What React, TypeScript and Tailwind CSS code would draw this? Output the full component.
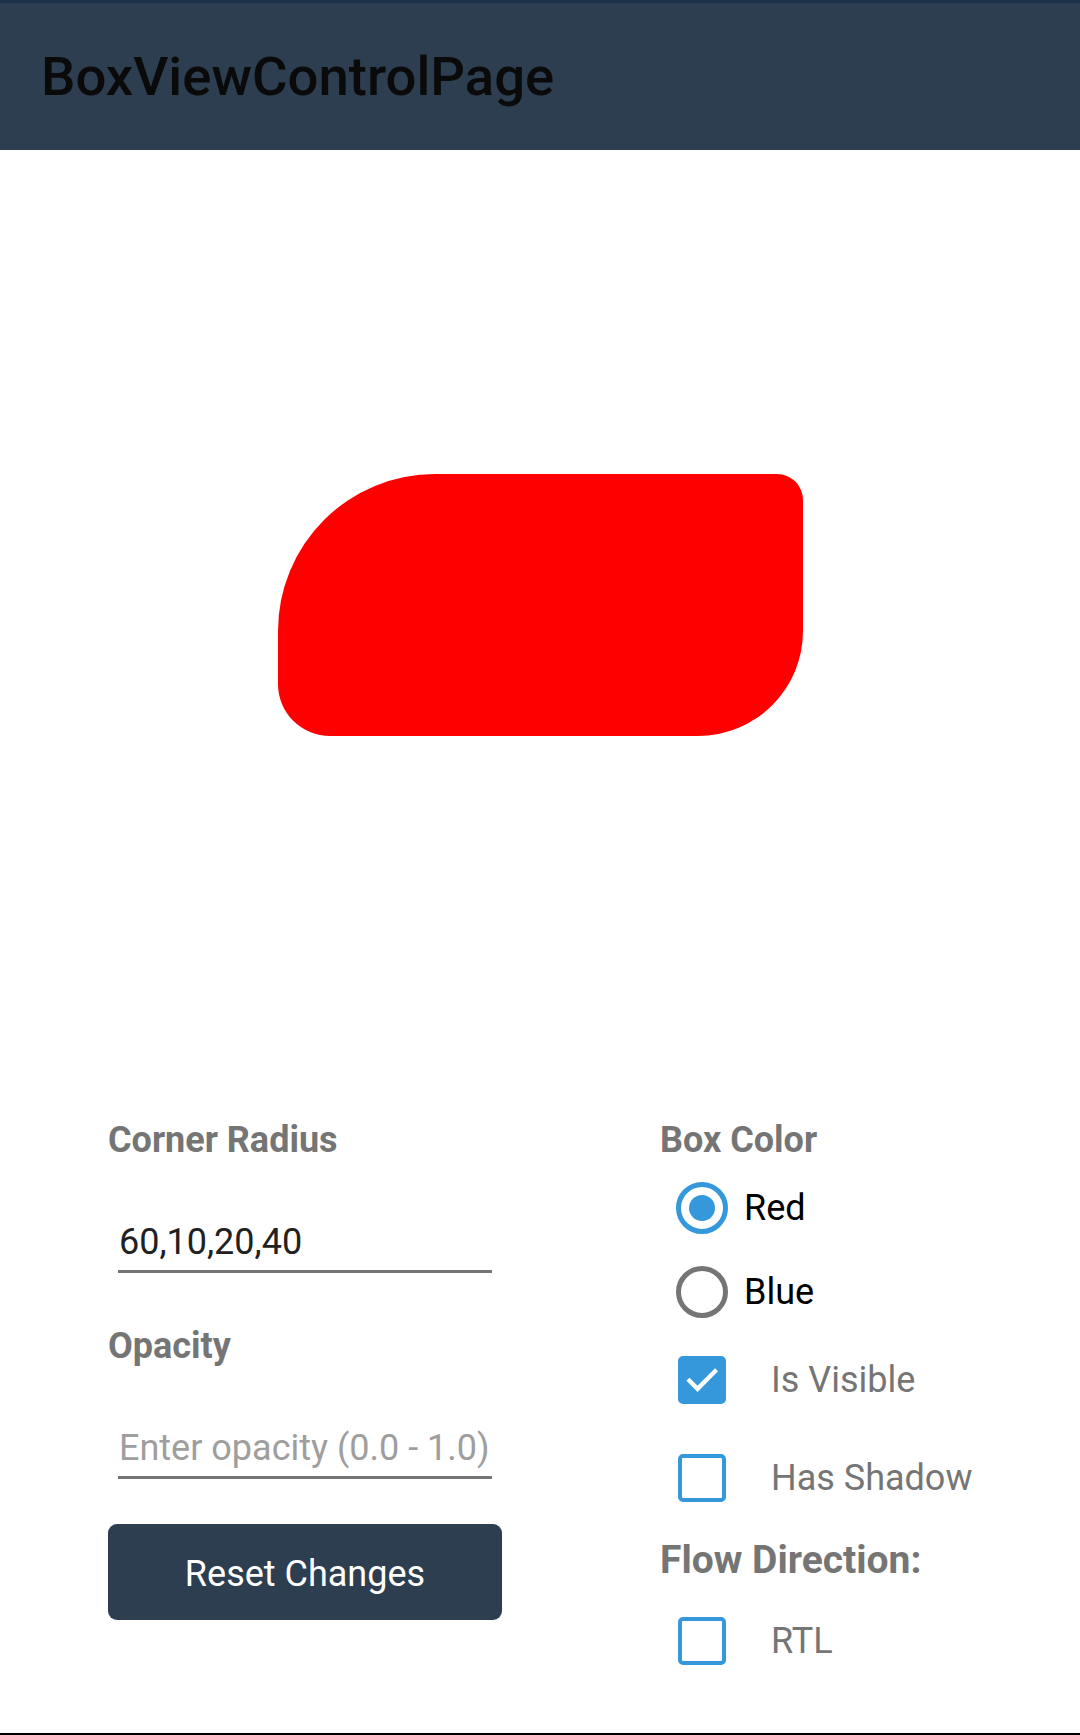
import { useState } from 'react';

function Radio({ checked, label, onSelect }: { checked: boolean; label: string; onSelect: () => void }) {
  return (
    <button onClick={onSelect} className="flex h-[84px] items-center text-left">
      <span
        className={`ml-[16px] flex h-[52px] w-[52px] items-center justify-center rounded-full border-[5px] ${
          checked ? 'border-[#3498db]' : 'border-[#757575]'
        }`}
      >
        {checked && <span className="h-[26px] w-[26px] rounded-full bg-[#3498db]" />}
      </span>
      <span className="ml-[16px] text-[36px] leading-[42px] text-black">{label}</span>
    </button>
  );
}

function CheckBox({ checked, label, onToggle }: { checked: boolean; label: string; onToggle: () => void }) {
  return (
    <button onClick={onToggle} className="flex h-[88px] items-center text-left">
      <span
        className={`ml-[18px] flex h-[48px] w-[48px] items-center justify-center rounded-[5px] border-[4px] border-[#3498db] ${
          checked ? 'bg-[#3498db]' : 'bg-white'
        }`}
      >
        {checked && (
          <svg viewBox="0 0 24 24" className="h-[40px] w-[40px]" fill="none">
            <path d="M4.5 12.5l4.8 4.8L19.8 6.8" stroke="white" strokeWidth="2.6" strokeLinecap="square" />
          </svg>
        )}
      </span>
      <span className="ml-[45px] text-[36px] leading-[42px] text-[#757575]">{label}</span>
    </button>
  );
}

export default function App() {
  const [color, setColor] = useState<'red' | 'blue'>('red');
  const [visible, setVisible] = useState(true);
  const [shadow, setShadow] = useState(false);
  const [rtl, setRtl] = useState(false);
  const [radius, setRadius] = useState('60,10,20,40');
  const [opacity, setOpacity] = useState('');

  return (
    <div className="flex h-[1735px] w-[1080px] flex-col bg-white font-['Roboto',sans-serif]">
      <header className="flex h-[150px] items-center border-t-[3px] border-[#1c3049] bg-[#2c3e50] pl-[41px]">
        <h1 className="text-[54.5px] font-medium leading-none text-[#0a0a0a]">BoxViewControlPage</h1>
      </header>

      <main className="flex-1">
        <div
          className={`mx-auto mt-[324px] h-[262px] w-[525px] rounded-tl-[157px] rounded-tr-[26px] rounded-br-[105px] rounded-bl-[52px] ${
            color === 'red' ? 'bg-[#ff0000]' : 'bg-[#0000ff]'
          } ${visible ? '' : 'invisible'} ${shadow ? 'shadow-2xl' : ''}`}
        />

        <div className="mt-[384px] grid grid-cols-[394px_1fr] gap-x-[158px] pl-[108px]" dir={rtl ? 'rtl' : 'ltr'}>
          <div className="flex flex-col">
            <h2 className="text-[36px] font-bold leading-[40px] text-[#757575]">Corner Radius</h2>
            <div className="mx-[10px] mt-[61px] border-b-[3px] border-[#757575] pb-[7px]">
              <input
                value={radius}
                onChange={(e) => setRadius(e.target.value)}
                className="block h-[42px] w-full bg-transparent pl-[1px] text-[36px] leading-[42px] text-[#212121] outline-none"
              />
            </div>

            <h2 className="mt-[53px] text-[36px] font-bold leading-[40px] text-[#757575]">Opacity</h2>
            <div className="mx-[10px] mt-[61px] border-b-[3px] border-[#757575] pb-[7px]">
              <input
                value={opacity}
                onChange={(e) => setOpacity(e.target.value)}
                placeholder="Enter opacity (0.0 - 1.0)"
                className="block h-[42px] w-full bg-transparent pl-[1px] text-[36px] leading-[42px] text-[#212121] outline-none placeholder:text-[#9e9e9e]"
              />
            </div>

            <button
              onClick={() => {
                setColor('red');
                setVisible(true);
                setShadow(false);
                setRtl(false);
                setRadius('60,10,20,40');
                setOpacity('');
              }}
              className="mt-[45px] h-[96px] w-[394px] rounded-[9px] bg-[#2c3e50] pt-[4px] text-[36px] text-white"
            >
              Reset Changes
            </button>
          </div>

          <div className="flex flex-col">
            <h2 className="text-[36px] font-bold leading-[40px] text-[#757575]">Box Color</h2>
            <div className="mt-[6px] flex flex-col">
              <Radio checked={color === 'red'} label="Red" onSelect={() => setColor('red')} />
              <Radio checked={color === 'blue'} label="Blue" onSelect={() => setColor('blue')} />
            </div>
            <div className="mt-[2px]">
              <CheckBox checked={visible} label="Is Visible" onToggle={() => setVisible(!visible)} />
            </div>
            <div className="mt-[10px]">
              <CheckBox checked={shadow} label="Has Shadow" onToggle={() => setShadow(!shadow)} />
            </div>
            <h2 className="mt-[15px] text-[39px] font-bold leading-[46px] text-[#757575]">Flow Direction:</h2>
            <div className="mt-[14px]">
              <CheckBox checked={rtl} label="RTL" onToggle={() => setRtl(!rtl)} />
            </div>
          </div>
        </div>
      </main>

      <div className="h-[2px] bg-black" />
    </div>
  );
}
